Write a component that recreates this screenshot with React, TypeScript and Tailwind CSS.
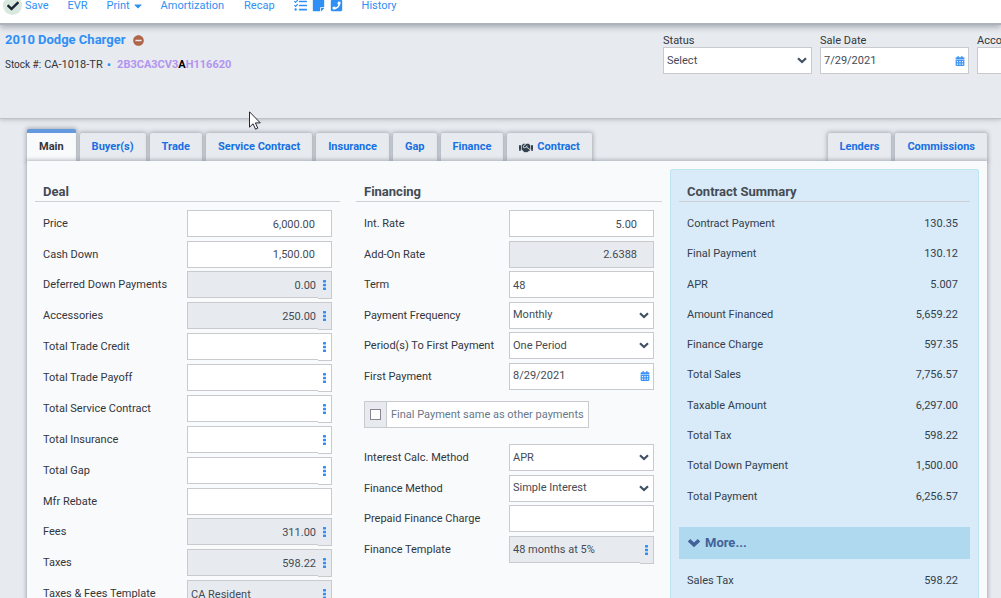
import React, { useState } from 'react';
import {
  FaCalendarAlt,
  FaCaretDown,
  FaCheck,
  FaHandshake,
  FaMinusCircle,
  FaPhoneSquare,
  FaStickyNote,
  FaTasks,
} from 'react-icons/fa';

type Field = {
  id: string;
  label: string;
  value?: string;
  kind?: 'amount' | 'text' | 'select' | 'date';
  readOnly?: boolean;
  menu?: boolean;
};

const headerFields: Field[] = [
  { id: 'status', label: 'Status', value: 'Select', kind: 'select' },
  { id: 'saleDate', label: 'Sale Date', value: '7/29/2021', kind: 'date' },
  { id: 'account', label: 'Account #' },
];

const dealTop: Field[] = [
  { id: 'price', label: 'Price', value: '6,000.00', kind: 'amount' },
  { id: 'cashDown', label: 'Cash Down', value: '1,500.00', kind: 'amount' },
];

const dealFields: Field[] = [
  { id: 'deferred', label: 'Deferred Down Payments', value: '0.00', kind: 'amount', readOnly: true, menu: true },
  { id: 'accessories', label: 'Accessories', value: '250.00', kind: 'amount', readOnly: true, menu: true },
  { id: 'tradeCredit', label: 'Total Trade Credit', kind: 'amount', menu: true },
  { id: 'tradePayoff', label: 'Total Trade Payoff', kind: 'amount', menu: true },
  { id: 'serviceContract', label: 'Total Service Contract', kind: 'amount', menu: true },
  { id: 'insurance', label: 'Total Insurance', kind: 'amount', menu: true },
  { id: 'gap', label: 'Total Gap', kind: 'amount', menu: true },
  { id: 'mfrRebate', label: 'Mfr Rebate', kind: 'amount' },
  { id: 'fees', label: 'Fees', value: '311.00', kind: 'amount', readOnly: true, menu: true },
  { id: 'taxes', label: 'Taxes', value: '598.22', kind: 'amount', readOnly: true, menu: true },
  { id: 'taxTemplate', label: 'Taxes & Fees Template', value: 'CA Resident', readOnly: true, menu: true },
];

const rateFields: Field[] = [
  { id: 'intRate', label: 'Int. Rate', value: '5.00', kind: 'amount' },
  { id: 'addOnRate', label: 'Add-On Rate', value: '2.6388', kind: 'amount', readOnly: true },
  { id: 'term', label: 'Term', value: '48' },
  { id: 'frequency', label: 'Payment Frequency', value: 'Monthly', kind: 'select' },
  { id: 'firstPeriod', label: 'Period(s) To First Payment', value: 'One Period', kind: 'select' },
  { id: 'firstPayment', label: 'First Payment', value: '8/29/2021', kind: 'date' },
];

const methodFields: Field[] = [
  { id: 'calcMethod', label: 'Interest Calc. Method', value: 'APR', kind: 'select' },
  { id: 'financeMethod', label: 'Finance Method', value: 'Simple Interest', kind: 'select' },
  { id: 'prepaid', label: 'Prepaid Finance Charge', kind: 'amount' },
  { id: 'financeTemplate', label: 'Finance Template', value: '48 months at 5%', readOnly: true, menu: true },
];

const summary = [
  ['Contract Payment', '130.35'],
  ['Final Payment', '130.12'],
  ['APR', '5.007'],
  ['Amount Financed', '5,659.22'],
  ['Finance Charge', '597.35'],
  ['Total Sales', '7,756.57'],
  ['Taxable Amount', '6,297.00'],
  ['Total Tax', '598.22'],
  ['Total Down Payment', '1,500.00'],
  ['Total Payment', '6,256.57'],
];

const tabs = ['Main', 'Buyer(s)', 'Trade', 'Service Contract', 'Insurance', 'Gap', 'Finance', 'Contract'];
const rightTabs = ['Lenders', 'Commissions'];

const Dots = () => (
  <svg viewBox="0 0 3 10" className="h-[10px] w-[3px] fill-[#2f8ff5]">
    <rect width="3" height="2.6" rx="0.6" />
    <rect y="3.7" width="3" height="2.6" rx="0.6" />
    <rect y="7.4" width="3" height="2.6" rx="0.6" />
  </svg>
);

const Control: React.FC<{ field: Field }> = ({ field }) => {
  const { id, label, value = '', kind = 'text', readOnly, menu } = field;

  if (kind === 'select') {
    return (
      <div className="relative">
        <select
          id={id}
          defaultValue={value}
          className="block h-[27px] w-full appearance-none border border-[#c8cacd] bg-white pt-px pl-[3px] text-[#444b54] outline-none"
        >
          <option>{value}</option>
        </select>
        <svg viewBox="0 0 10 7" className="pointer-events-none absolute top-[10px] right-[5px] h-[7px] w-[10px]">
          <path d="M1 1.2l4 3.8 4-3.8" fill="none" stroke="#3f5162" strokeWidth="2.2" />
        </svg>
      </div>
    );
  }

  if (kind === 'date') {
    return (
      <div className="flex h-[27px] items-center border border-[#c8cacd] bg-white">
        <input
          id={id}
          defaultValue={value}
          className="w-full min-w-0 flex-1 pt-px pl-[3px] text-[#444b54] outline-none"
        />
        <button aria-label={`Pick ${label}`} className="pr-[3px] text-[#3b94f6]">
          <FaCalendarAlt className="size-[10px]" />
        </button>
      </div>
    );
  }

  return (
    <div className="flex items-start">
      <input
        id={id}
        defaultValue={value}
        readOnly={readOnly}
        className={`block h-[27px] w-full min-w-0 flex-1 border border-[#c8cacd] pt-px pl-[3px] text-[#444b54] outline-none ${
          kind === 'amount' ? 'text-right' : ''
        } ${menu ? 'border-r-0 pr-[2px]' : 'pr-4'} ${readOnly ? 'bg-[#e7eaef]' : 'bg-white'}`}
      />
      {menu && (
        <button
          aria-label={`${label} details`}
          className={`flex h-7 w-[14px] items-center justify-center border border-l-0 border-[#c8cacd] ${
            readOnly ? 'bg-[#e7eaef]' : 'bg-white'
          }`}
        >
          <Dots />
        </button>
      )}
    </div>
  );
};

const FieldRow: React.FC<{ field: Field }> = ({ field }) => (
  <div className="grid grid-cols-[1fr_145px] items-start px-2">
    <label htmlFor={field.id} className="pt-px leading-[26px] whitespace-nowrap">
      {field.label}
    </label>
    <Control field={field} />
  </div>
);

const Heading: React.FC<{ children: React.ReactNode }> = ({ children }) => (
  <h2 className="mb-2 h-[33px] border-b border-[#cdd1d6] pt-[14px] pl-2 text-[13px] leading-[18px] font-bold text-[#444b54]">
    {children}
  </h2>
);

const Tab: React.FC<{ name: string; active: boolean; onSelect: () => void }> = ({ name, active, onSelect }) => (
  <button
    role="tab"
    aria-selected={active}
    onClick={onSelect}
    className={`flex items-center gap-1 rounded-t-[2px] px-3 pt-px font-bold whitespace-nowrap shadow-[0_0_4px_1px_rgba(70,80,95,0.4)] ${
      active ? 'h-8 border-t-4 border-[#6499e0] bg-[#f9fafc] text-[#33363b]' : 'h-7 bg-[#e7eaef] text-[#1670e3]'
    }`}
  >
    {name === 'Contract' && <FaHandshake className="size-[14px] text-[#33404d]" />}
    {name}
  </button>
);

const App: React.FC = () => {
  const [tab, setTab] = useState('Main');

  return (
    <div className="relative h-screen overflow-hidden bg-[#e7eaef] font-[Roboto,sans-serif] text-[11px] text-[#33363b]">
      <header className="relative h-[25px] border-b-2 border-[#aeb2b9] bg-white shadow-[0_2px_6px_rgba(60,70,85,0.4)]">
        <nav className="flex h-[11px] items-center pl-[3px] leading-[11px] whitespace-nowrap text-[#2f8ff5]">
          <button className="flex items-center gap-[3px]">
            <span className="flex size-[19px] items-center justify-center rounded-full bg-[#d8e9e0]">
              <FaCheck className="size-3 text-[#1d2733]" />
            </span>
            Save
          </button>
          <button className="ml-[19px]">EVR</button>
          <button className="ml-[19px] flex items-center gap-1">
            Print <FaCaretDown className="h-3 w-2" />
          </button>
          <button className="ml-[19px]">Amortization</button>
          <button className="ml-5">Recap</button>
          <div className="ml-[19px] flex gap-[5px]">
            <button aria-label="Tasks">
              <FaTasks className="size-[13px]" />
            </button>
            <button aria-label="Notes">
              <FaStickyNote className="size-[13px]" />
            </button>
            <button aria-label="Calls">
              <FaPhoneSquare className="size-[13px]" />
            </button>
          </div>
          <button className="ml-[19px]">History</button>
        </nav>
      </header>

      <section className="flex h-[94px] border-b border-[#bfc3c9] shadow-[0_1px_4px_rgba(60,70,85,0.25)]">
        <div className="flex-1 pt-[6px] pl-[5px]">
          <h1 className="flex items-center gap-2 text-[13px] leading-[18px] font-bold text-[#2f8ff5]">
            2010 Dodge Charger <FaMinusCircle className="size-[11px] text-[#b0654a]" />
          </h1>
          <p className="mt-[7px] flex items-center leading-[18px]">
            <span className="text-[10px]">Stock #:</span>
            <span className="ml-[3px]">CA-1018-TR</span>
            <span className="mx-1 text-[13px] text-[#2f8ff5]">•</span>
            <span className="ml-[2px] font-bold text-[#b294f0]">
              2B3CA3CV3<span className="text-black">A</span>H116620
            </span>
          </p>
        </div>
        <div className="flex w-[338px] shrink-0 gap-2 overflow-hidden pt-[9px]">
          {headerFields.map(field => (
            <div key={field.id} className="w-[149px] shrink-0">
              <label htmlFor={field.id} className="block leading-[13px]">
                {field.label}
              </label>
              <Control field={field} />
            </div>
          ))}
        </div>
      </section>

      <main className="mr-[14px] ml-[27px] pt-[10px]">
        <div role="tablist" className="flex items-end gap-1">
          {tabs.map(name => (
            <Tab key={name} name={name} active={tab === name} onSelect={() => setTab(name)} />
          ))}
          <div className="flex-1" />
          {rightTabs.map(name => (
            <Tab key={name} name={name} active={tab === name} onSelect={() => setTab(name)} />
          ))}
        </div>

        <div className="relative grid grid-cols-[313fr_306fr_309fr] gap-2 bg-[#f9fafc] p-2 shadow-[0_0_4px_1px_rgba(70,80,95,0.4)]">
          <section className="pr-2">
            <Heading>Deal</Heading>
            <div className="grid h-[61px] auto-rows-fr">
              {dealTop.map(field => (
                <FieldRow key={field.id} field={field} />
              ))}
            </div>
            <div className="flex flex-col gap-[3px]">
              {dealFields.map(field => (
                <FieldRow key={field.id} field={field} />
              ))}
            </div>
          </section>

          <section>
            <Heading>Financing</Heading>
            <div className="grid h-[183px] auto-rows-fr">
              {rateFields.map(field => (
                <FieldRow key={field.id} field={field} />
              ))}
            </div>
            <label className="mt-2 mb-4 ml-2 inline-flex h-[27px] items-center border border-[#c8cacd] bg-white text-[#66788a]">
              <span className="flex h-full w-[22px] items-center justify-center border-r border-[#c8cacd] bg-[#e7eaef]">
                <input type="checkbox" className="size-[11px] appearance-none border border-[#8a8590] bg-white" />
              </span>
              <span className="px-1 pt-px whitespace-nowrap">Final Payment same as other payments</span>
            </label>
            <div className="grid h-[122px] auto-rows-fr">
              {methodFields.map(field => (
                <FieldRow key={field.id} field={field} />
              ))}
            </div>
          </section>

          <section className="rounded-[3px] bg-[#d9ebf8] px-[9px] text-[#33404d] ring-1 ring-[#bde6f2] ring-inset">
            <Heading>Contract Summary</Heading>
            <dl className="grid h-[303px] auto-rows-fr">
              {summary.map(([label, value]) => (
                <div key={label} className="flex justify-between pr-3 pl-2 leading-7">
                  <dt>{label}</dt>
                  <dd>{value}</dd>
                </div>
              ))}
            </dl>
            <button className="mt-[14px] flex h-8 w-full items-center gap-1 bg-[#aed9ee] pl-2 text-[13px] font-bold text-[#446299]">
              <svg viewBox="0 0 14 10" className="h-[10px] w-[14px]">
                <path d="M2 2.2l5 4.6 5-4.6" fill="none" stroke="currentColor" strokeWidth="3.6" />
              </svg>
              More...
            </button>
            <dl>
              <div className="mt-2 flex justify-between pr-3 pl-2 leading-7">
                <dt>Sales Tax</dt>
                <dd>598.22</dd>
              </div>
            </dl>
          </section>
        </div>
      </main>

      {/* mouse pointer */}
      <svg viewBox="0 0 12 19" className="absolute top-[111px] left-[249px] h-[19px] w-3">
        <path
          d="M.5.8v15.4l3.6-3.4 2.4 5.4 2.3-1-2.4-5.3h4.9z"
          fill="#fff"
          stroke="#222831"
          strokeWidth="1"
        />
      </svg>
    </div>
  );
};

export default App;
